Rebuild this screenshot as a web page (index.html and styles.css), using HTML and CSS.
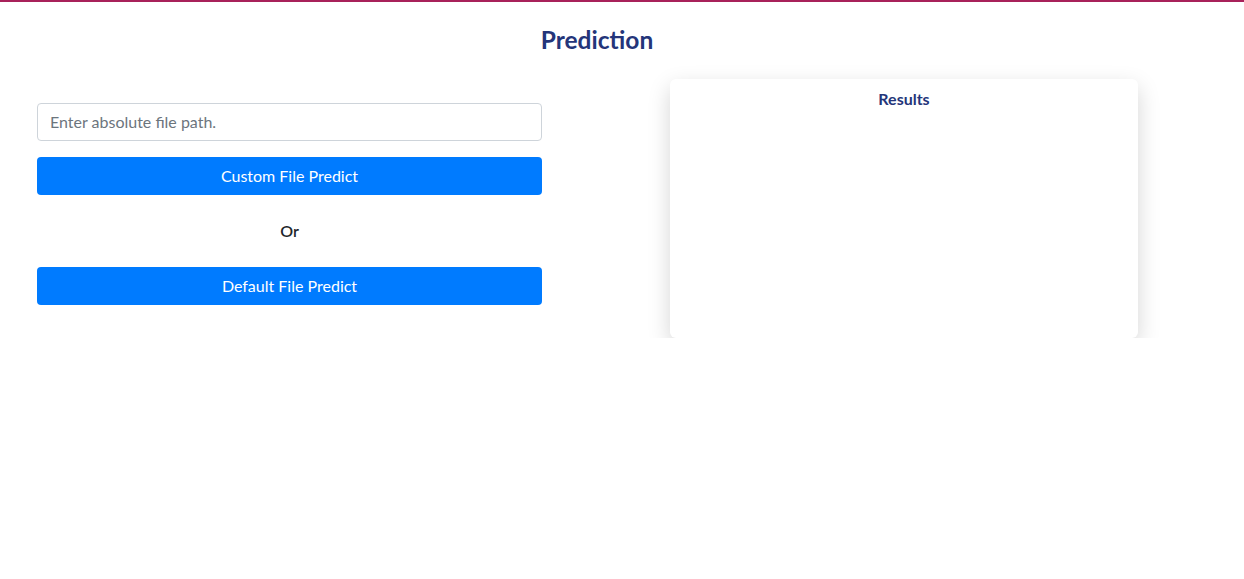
FILE: index.html
```html
<!DOCTYPE html>
<html>
<head>
<meta charset="utf-8">
<link rel="stylesheet" href="styles.css">
</head>
<body>
<div class="topbar"></div>
<h1 class="title">Prediction</h1>
<div class="row">
  <div class="left">
    <input class="path-input" type="text" placeholder="Enter absolute file path.">
    <button class="btn">Custom File Predict</button>
    <div class="or">Or</div>
    <button class="btn">Default File Predict</button>
  </div>
  <div class="card">
    <div class="card-title">Results</div>
  </div>
</div>
</body>
</html>
```
FILE: styles.css
```css
html, body {
  margin: 0;
  padding: 0;
  background: #fff;
  font-family: Lato, "Open Sans", sans-serif;
}
.topbar {
  height: 2px;
  background: #a8215a;
}
.title {
  margin: 23px 0 0;
  padding-right: 50px;
  text-align: center;
  font-size: 24.5px;
  line-height: 29px;
  font-weight: 700;
  color: #24357a;
}
.row {
  display: flex;
  align-items: flex-start;
  padding-left: 37px;
  margin-top: 25px;
}
.left {
  width: 505px;
  display: flex;
  flex-direction: column;
  margin-top: 24px;
}
.path-input {
  box-sizing: border-box;
  height: 38px;
  width: 100%;
  border: 1px solid #ced4da;
  border-radius: 4px;
  padding: 0 12px 2px;
  font-family: Lato, sans-serif;
  font-size: 16px;
  color: #495057;
  outline: none;
}
.path-input::placeholder {
  color: #6c757d;
}
.btn {
  box-sizing: border-box;
  height: 38px;
  width: 100%;
  margin-top: 16px;
  padding: 0 0 2px;
  border: none;
  border-radius: 4px;
  background: #007bff;
  color: #fff;
  font-family: Lato, sans-serif;
  font-size: 16px;
  cursor: pointer;
}
.or {
  text-align: center;
  font-size: 16px;
  font-weight: 600;
  color: #212529;
  line-height: 24px;
  margin: 24px 0 24px;
}
.or + .btn { margin-top: 0; }
.card {
  box-sizing: border-box;
  width: 468px;
  height: 259px;
  margin-left: 128px;
  border-radius: 6px;
  background: #fff;
  box-shadow: 0 8px 22px rgba(0, 0, 0, 0.17);
  padding-top: 10px;
}
.card-title {
  text-align: center;
  font-size: 16px;
  font-weight: 700;
  color: #24357a;
  line-height: 20px;
}
```
